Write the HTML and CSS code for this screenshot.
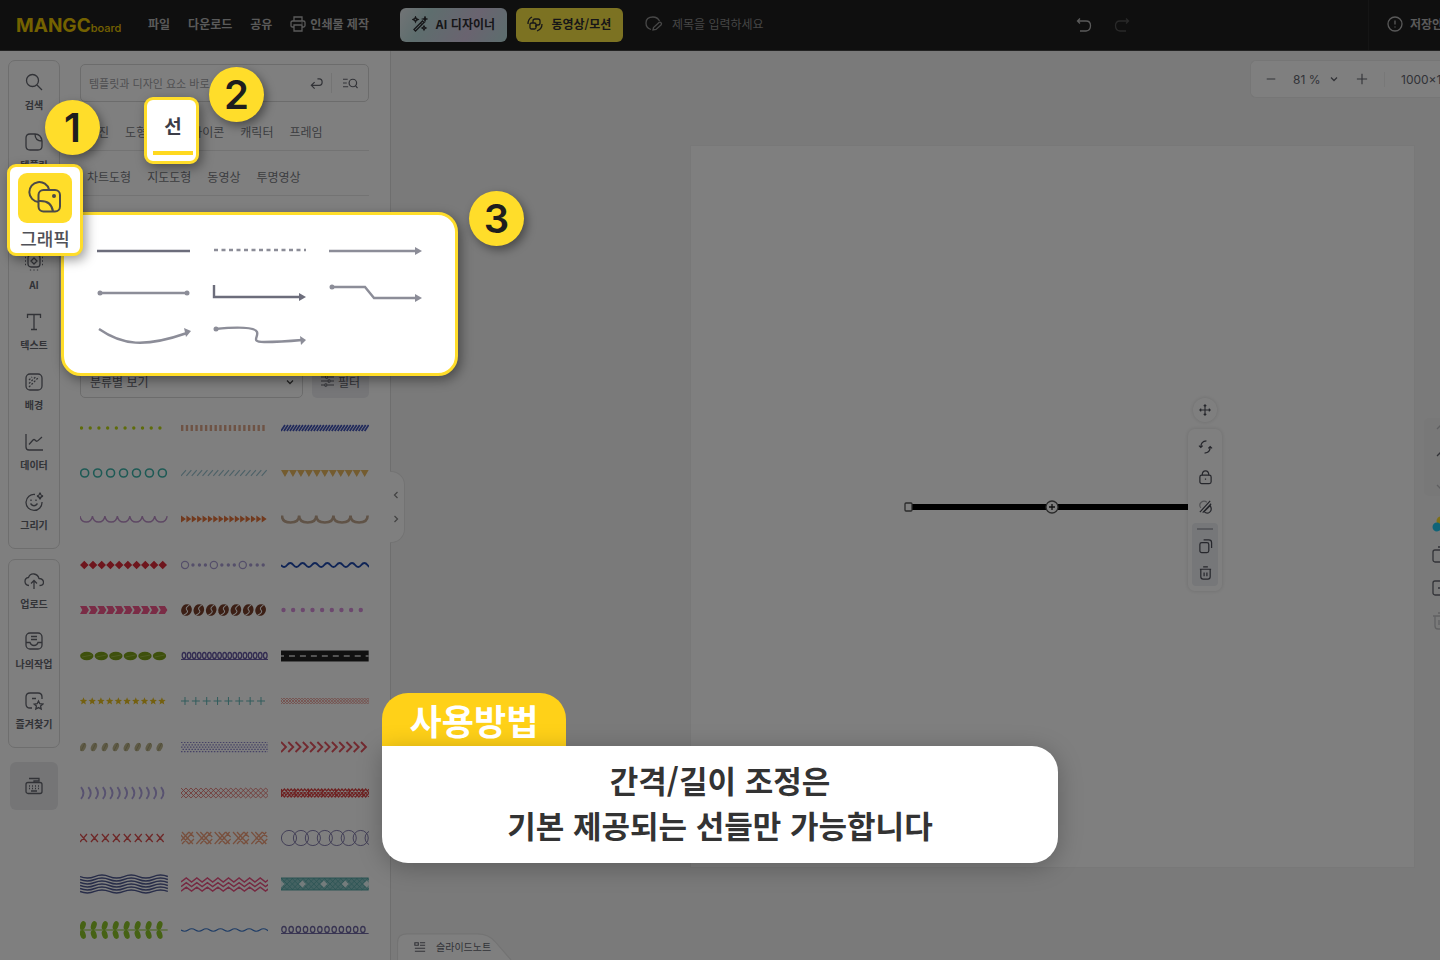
FILE: index.html
```
<!DOCTYPE html>
<html lang="ko">
<head>
  <meta charset="UTF-8">
  <title>MANGOboard</title>
  <link rel="stylesheet" href="styles.css">
</head>
<body>

  <div class="app">
    <header class="topbar">
      <a class="logo" href="#">MANGC<span>board</span></a>
      <nav class="menu">
        <a href="#">파일</a>
        <a href="#">다운로드</a>
        <a href="#">공유</a>
        <a href="#" class="print">
          <svg class="icon-sm" viewBox="0 0 16 16"><path d="M4 5V1h8v4M4 11H2.500Q1 11 1 9.500V6.500Q1 5 2.500 5h11Q15 5 15 6.500v3Q15 11 13.500 11H12M4 9h8v6H4zM11.500 7h1"/></svg>
          인쇄물 제작
        </a>
      </nav>
      <button class="btn btn-ai">
        <svg class="icon-sm" viewBox="0 0 16 16"><path d="M2 13.500 10.500 5l1.500 1.500L3.500 15zM8.500 7l1.500 1.500M3.500 1l.8 1.700L6 3.500l-1.700.8L3.500 6l-.8-1.700L1 3.500l1.700-.8zM13 1l.5 1.500L15 3l-1.500.5L13 5l-.5-1.500L11 3l1.500-.5zM12 10l.7 1.300L14 12l-1.300.7L12 14l-.7-1.300L10 12l1.300-.7z"/></svg>
        AI 디자이너
      </button>
      <button class="btn btn-video">
        <svg class="icon-sm" viewBox="0 0 16 16"><rect x="3" y="7" width="6" height="6" rx="1.500"/><path d="M6 7V5q0-2 2-2h3q2 0 2 2v2q0 2-2 2H9M9 9v2M1 8Q1 3 5 1M15 8q0 5-5 7"/></svg>
        동영상/모션
      </button>
      <label class="title">
        <svg class="icon" viewBox="0 0 20 20"><path d="M7 15.500Q2 14 2 9q0-6 7-6 4.500 0 6.500 4M9 16l.5-2.500L15 8.500q1-.8 2 .2t.2 2L12 15.500z"/></svg>
        <input type="text" placeholder="제목을 입력하세요">
      </label>
      <div class="history">
        <button aria-label="실행 취소"><svg class="icon-sm" viewBox="0 0 16 16"><path d="M4 1.500 1.500 4 4 6.500M2 4h8q4.500 0 4.500 4.800T10 14H4"/></svg></button>
        <button aria-label="다시 실행" disabled><svg class="icon-sm" viewBox="0 0 16 16"><path d="M12 1.500 14.500 4 12 6.500M14 4H6Q1.500 4 1.500 8.800T6 14h6"/></svg></button>
      </div>
      <div class="save">
        <svg class="icon-sm" viewBox="0 0 16 16"><circle cx="8" cy="8" r="7"/><path d="M8 4.500v4M8 10.500v1"/></svg>
        <span>저장안됨</span>
      </div>
    </header>

    <div class="main">
      <aside class="rail">
        <div class="rail-box">
          <button><svg class="icon" viewBox="0 0 20 20"><circle cx="8.500" cy="8.500" r="6"/><path d="m13 13 5 5"/></svg>검색</button>
          <button><svg class="icon" viewBox="0 0 20 20"><path d="M11 2H6Q2 2 2 6v8q0 4 4 4h8q4 0 4-4V9M11 2q6 0 7 7-7 0-7-7z"/></svg>템플릿</button>
          <button aria-label="그래픽"></button>
          <button><svg class="icon" viewBox="0 0 20 20"><rect x="4" y="3" width="12" height="12" rx="3"/><path d="m10 6 3 3-3 3-3-3zM1 5.500h1M1 9h1M1 12.500h1M18 5.500h1M18 9h1M18 12.500h1M6.500 17.500v1M10 17.500v1M13.500 17.500v1"/></svg>AI</button>
          <button><svg class="icon" viewBox="0 0 20 20"><path d="M3.500 6V2.500h13V6M10 2.500v15M7 17.500h6"/></svg>텍스트</button>
          <button><svg class="icon" viewBox="0 0 20 20"><rect x="2" y="2" width="16" height="16" rx="4"/><path stroke-dasharray="2 1.500" d="M5 15 15 5M5 11.500 11.500 5M5 8l3-3"/></svg>배경</button>
          <button><svg class="icon" viewBox="0 0 20 20"><path d="M2 2v13q0 3 3 3h14M5 12.500l4-4.500q1-1 2 0l1 1q1 .6 2-.4L18 5"/></svg>데이터</button>
          <button><svg class="icon" viewBox="0 0 20 20"><path d="M11 2.500A8 8 0 1 0 18 10M6.500 11.500q3.500 4.500 7 0M7 7.500v1.500M12 7.500v1.500M16 .5q.5 3 3 3.500-2.500.5-3 3.500-.5-3-3-3.500 2.500-.5 3-3.500z"/></svg>그리기</button>
        </div>
        <div class="rail-box">
          <button><svg class="icon" viewBox="0 0 20 20"><path d="M5 14.500Q1 14 1 10.500 1 7 4.500 6.500 6 2.500 10 3t5 4.500q4.500.5 4.500 3.700 0 3.300-4 3.300M10 18V9.500M7 12.500l3-3 3 3"/></svg>업로드</button>
          <button><svg class="icon" viewBox="0 0 20 20"><rect x="2" y="2" width="16" height="16" rx="4"/><path d="M2 11.500h4q1 3 4 3t4-3h4M7 5.500h6M7 8.500h6"/></svg>나의작업</button>
          <button><svg class="icon" viewBox="0 0 20 20"><path d="M8 17H6q-4 0-4-4V6q0-4 4-4h8q4 0 4 4v2M8 7.500h4M14.500 10l1.300 2.700 3 .4-2.200 2 .6 3-2.700-1.500-2.700 1.500.6-3-2.200-2 3-.4z"/></svg>즐겨찾기</button>
        </div>
        <button class="keyboard" aria-label="단축키"><svg class="icon" viewBox="0 0 20 20"><rect x="2" y="6.500" width="16" height="11" rx="2"/><path d="M5 10h1M8 10h1M11 10h1M14 10h1M5 12.500h1M8 12.500h1M11 12.500h1M14 12.500h1M7 15h6M10 6.500V5h5V2.500H5"/></svg></button>
      </aside>

      <section class="panel">
        <form class="search">
          <input type="text" aria-label="검색" placeholder="템플릿과 디자인 요소 바로 찾기">
          <button type="button" aria-label="입력"><svg class="icon-sm" viewBox="0 0 16 16"><path d="M6 7 2.500 10.500 6 14M3 10.500h8q3 0 3-3.500t-3-3.500H9"/></svg></button>
          <button type="button" class="search-go" aria-label="상세 검색"><svg class="icon-sm" viewBox="0 0 16 16"><circle cx="10.500" cy="8" r="4"/><path d="m13.500 11 2 2.500M0 4h5M0 8h4M0 12h5.500"/></svg></button>
        </form>
        <nav class="tabs">
          <a href="#">사진</a><a href="#">도형</a><a href="#" class="tab-line" aria-label="선"></a><a href="#">아이콘</a><a href="#">캐릭터</a><a href="#">프레임</a>
        </nav>
        <nav class="tabs">
          <a href="#">차트도형</a><a href="#">지도도형</a><a href="#">동영상</a><a href="#">투명영상</a>
        </nav>
        <div class="filters">
          <select aria-label="분류"><option>분류별 보기</option></select>
          <button><svg class="icon-sm" viewBox="0 0 16 16"><path d="M0 3h5M9 3h7M0 8h8M12 8h4M0 13h4M8 13h8"/><circle cx="7" cy="3" r="1.500"/><circle cx="10" cy="8" r="1.500"/><circle cx="6" cy="13" r="1.500"/></svg>필터</button>
        </div>
        <div class="line-list" id="lineList"></div>
        <div class="handle">
          <button aria-label="접기"><svg viewBox="0 0 8 8"><path d="M5.500 1 2.500 4l3 3"/></svg></button>
          <button aria-label="펼치기"><svg viewBox="0 0 8 8"><path d="m2.500 1 3 3-3 3"/></svg></button>
        </div>
      </section>

      <main class="workspace">
        <div class="canvas">
          <svg class="drawn-line" viewBox="0 0 290 16">
            <path class="bar" d="M6 8h284"/>
            <rect x="3" y="4" width="7" height="8" rx="1"/>
            <circle cx="150" cy="8" r="6"/>
            <path class="plus" d="M150 5v6M147 8h6"/>
          </svg>
          <div class="object-tools">
            <button class="move" aria-label="이동"><svg class="icon-xs" viewBox="0 0 14 14"><path d="M7 1v12M1 7h12M5.500 2.500 7 1l1.500 1.500M5.500 11.500 7 13l1.500-1.500M2.500 5.500 1 7l1.500 1.500M11.500 5.500 13 7l-1.500 1.500"/></svg></button>
            <div class="object-menu">
              <button aria-label="회전"><svg class="icon-sm" viewBox="0 0 16 16"><path d="M9 1.500Q3 2 3 8M1 6.500l2 2 2-2M7 14.500Q13 14 13 8M11 9.500l2-2 2 2"/></svg></button>
              <button aria-label="잠금"><svg class="icon-sm" viewBox="0 0 16 16"><rect x="2" y="6" width="12" height="9" rx="2"/><path d="M4.500 6q0-4.500 3.500-4.500T11.500 6M8 9.500v1.500"/></svg></button>
              <button aria-label="투명도"><svg class="icon-sm" viewBox="0 0 16 16"><path d="M2 13.500 13 1.500M5 14 14 4.500"/><path d="M6.500 13q3 3 6 .5t.5-7z"/><path opacity=".5" d="M3 9Q.5 5.500 3.500 3t6 0"/></svg></button>
              <div class="object-more">
                <span></span>
                <button aria-label="복제"><svg class="icon-sm" viewBox="0 0 16 16"><rect x="2" y="4.500" width="9.500" height="10.500" rx="2"/><path d="M6 1.500h5.500q3 0 3 3V10"/></svg></button>
                <button aria-label="삭제"><svg class="icon-sm" viewBox="0 0 16 16"><path d="M2 4h12M5.500 1.500h5M3 4v8q0 2.500 2.500 2.500h5Q13 14.500 13 12V4M6.500 7.500v4M9.500 7.500v4"/></svg></button>
              </div>
            </div>
          </div>
        </div>

        <div class="zoombar">
          <button aria-label="축소"><svg class="icon-xs" viewBox="0 0 14 14"><path d="M2 7h10"/></svg></button>
          <span class="zoom-value">81 %</span>
          <svg class="chevron" viewBox="0 0 8 8"><path d="m1 2.500 3 3 3-3"/></svg>
          <button aria-label="확대"><svg class="icon-xs" viewBox="0 0 14 14"><path d="M1 7h12M7 1v12"/></svg></button>
          <span class="page-size">1000×1000</span>
        </div>

        <div class="page-tools">
          <div class="page-order">
            <button aria-label="맨 위로" disabled><svg class="icon-sm" viewBox="0 0 16 16"><path d="M8 14V3M4 7l4-4 4 4"/></svg></button>
            <button aria-label="위로"><svg class="icon-sm" viewBox="0 0 16 16"><path d="M8 14V3M4 7l4-4 4 4"/></svg></button>
            <button aria-label="아래로" disabled><svg class="icon-sm" viewBox="0 0 16 16"><path d="M8 2v11M4 9l4 4 4-4"/></svg></button>
          </div>
          <button aria-label="색상"><svg class="palette" viewBox="0 0 18 16"><circle cx="9" cy="5" r="4.500" fill="#ffe030"/><circle cx="5" cy="11" r="4.500" fill="#20c8f0"/><circle cx="13" cy="11" r="4.500" fill="#2020e0"/></svg></button>
          <button aria-label="페이지 복제"><svg class="icon" viewBox="0 0 20 20"><rect x="2" y="5" width="13" height="12" rx="2"/><path d="M7 2h8q3 0 3 3v7"/></svg></button>
          <button aria-label="페이지 추가"><svg class="icon" viewBox="0 0 20 20"><rect x="2" y="3" width="16" height="14" rx="2"/><path d="M7 10h6M10 7v6"/></svg></button>
          <button aria-label="페이지 삭제" disabled><svg class="icon" viewBox="0 0 20 20"><path d="M2 5h16M7 2h6M4 5v10q0 3 3 3h6q3 0 3-3V5M8 9v5M12 9v5"/></svg></button>
        </div>

        <button class="note-tab">
          <svg class="note-shape" viewBox="0 0 124 28" preserveAspectRatio="none"><path d="M.5 28V10Q.5 1 10 1h70q12 0 19 9l15 18"/></svg>
          <svg class="icon-xs" viewBox="0 0 14 14"><path d="M1 2h4v3H1zM7 2h6M7 5h6M1 8.500h12M1 12h12"/></svg>
          <span>슬라이드노트</span>
        </button>
      </main>
    </div>
  </div>

  <div class="dim"></div>

  <div class="guide-lines spot">
    <svg viewBox="0 0 94 42"><path class="dark" d="M1 21h93"/></svg>
    <svg viewBox="0 0 94 42"><path stroke-dasharray="4 3.500" d="M2 20h92"/></svg>
    <svg viewBox="0 0 94 42"><path d="M1 21h88"/><path class="head" d="m87 17 7 4-7 4z"/></svg>
    <svg viewBox="0 0 94 42"><path d="M3 21h89"/><circle cx="4" cy="21" r="2.500"/><circle cx="91" cy="21" r="2.500"/></svg>
    <svg viewBox="0 0 94 42"><path class="dark" d="M2 13v12h86"/><path class="head dark-head" d="m87 21 7 4-7 4z"/></svg>
    <svg viewBox="0 0 94 42"><path d="M3 15h34l9 11h43"/><circle cx="4" cy="15" r="2.500"/><path class="head" d="m87 22 7 4-7 4z"/></svg>
    <svg viewBox="0 0 94 42"><path d="M3 15C26 31 48 34 91 19"/><path class="head" d="m88 14 7 3-5 6z"/></svg>
    <svg viewBox="0 0 94 42"><path d="M3 15C25 13 43 13 45 18S38 28 52 28q16 0 38-2"/><circle cx="4" cy="15" r="2.500"/><path class="head" d="m88 22 6 4-5 5z"/></svg>
  </div>

  <div class="guide-graphic spot">
    <div class="guide-icon">
      <svg viewBox="0 0 36 36"><path d="M11.500 22A10 10 0 1 1 22 9.500"/><rect x="11.500" y="10" width="21.500" height="21.500" rx="5"/><path d="M11.500 21q13-1 14.500 10.500"/><circle cx="27" cy="16" r="2"/></svg>
    </div>
    <span>그래픽</span>
  </div>

  <div class="guide-tab spot"><span>선</span></div>

  <div class="step step-1">1</div>
  <div class="step step-2">2</div>
  <div class="step step-3">3</div>

  <div class="howto">
    <h2>사용방법</h2>
    <p>간격/길이 조정은<br>기본 제공되는 선들만 가능합니다</p>
  </div>

  <script>
    // each swatch is 88 x 30, centred on y = 15
    const rep = (n, step, fn) => Array.from({ length: n }, (_, i) => fn(i * step, i)).join("");
    const stroke = (color, width, d) => `<path fill="none" stroke="${color}" stroke-width="${width}" d="${d}"/>`;
    const fill = (color, d) => `<path fill="${color}" d="${d}"/>`;
    const dot = (x, r, color) => `<circle cx="${x}" cy="15" r="${r}" fill="${color}"/>`;
    const ring = (x, r, color, w) => `<circle cx="${x}" cy="15" r="${r}" fill="none" stroke="${color}" stroke-width="${w}"/>`;
    const wave = (y, half, amp, n) => `M0 ${y}` + rep(n, 1, (_, i) => `q${half / 2} ${i % 2 ? -amp : amp} ${half} 0`);
    const zigzag = (y, half, h) => `M0 ${y}` + rep(Math.ceil(88 / half), 1, (_, i) => `l${half} ${i % 2 ? h : -h}`);
    const mesh = (top, h, step) => rep(Math.ceil(88 / step) + 4, step, x => `M${x - 2 * step} ${top}l${h} ${h}M${x - 2 * step} ${top + h}l${h} ${-h}`);
    const loops = (n, step, rx, color) =>
      rep(n, step, x => `<ellipse cx="${x + 3}" cy="14.500" rx="${rx}" ry="3" fill="none" stroke="${color}"/>`) + stroke(color, 1, "M0 18.500h88");

    const lines = [
      rep(10, 8.75, x => dot(x + 1.5, 1.7, "#bcd814")),
      stroke("#dca68a", 2.4, rep(18, 4.8, x => `M${x + 1.2} 12v6`)),
      stroke("#4254b8", 1.7, rep(29, 3, x => `M${x} 18l4-6`)),
      rep(7, 13, x => ring(x + 4.7, 4, "#3cb4aa", 1.6)),
      stroke("#9cc4d0", 1.2, rep(16, 5.4, x => `M${x} 18l5-6`)),
      fill("#e8b860", rep(11, 8, x => `M${x} 12h8l-4 7z`)),
      stroke("#bc90c8", 1.4, "M0 12" + rep(7, 1, () => "q1 6 6.250 6t6.250-6")),
      fill("#e4743c", rep(16, 5.4, x => `M${x} 11.500l5 3.500-5 3.500z`)),
      stroke("#c0a68e", 2.6, "M1 11.500" + rep(5, 1, () => "q0 7 8.600 7t8.600-7")),
      fill("#dd2d3a", rep(10, 8.75, x => `M${x} 15l4.300-4.300 4.300 4.300-4.300 4.300z`)),
      rep(3, 29, x => ring(x + 4, 3.6, "#aa9ed4", 1.3) + dot(x + 12, 1.7, "#aa9ed4") + dot(x + 18.5, 1.7, "#aa9ed4") + dot(x + 24.5, 1.7, "#aa9ed4")),
      stroke("#1e48ac", 2, wave(15, 6.2, 4, 15)),
      fill("#f4588c", rep(10, 8.75, x => `M${x} 11h6.500l2.500 4-2.500 4h-6.500l2.300-4z`)),
      rep(7, 12.4, x => `<g transform="rotate(25 ${x + 5.5} 15)"><ellipse cx="${x + 5.5}" cy="15" rx="5.200" ry="6" fill="#783f2b"/>${stroke("#fff", 1, `M${x + 6} 9q-3 5 0 6t-1 6`)}</g>`),
      rep(9, 9.7, x => dot(x + 2.5, 2.2, "#d890dc")),
      rep(6, 14.6, x => `<ellipse cx="${x + 6.8}" cy="15" rx="6.700" ry="4.200" fill="#7ca018"/>${stroke("#b4c968", 0.6, `M${x + 2} 16l10-2`)}`),
      loops(17, 5.1, 1.8, "#6658a4"),
      `<rect y="9.500" width="88" height="11" fill="#222"/>` + `<path stroke="#d4d4d4" stroke-width="1.500" stroke-dasharray="6 5" stroke-dashoffset="3" d="M0 15h88"/>`,
      fill("#e8c020", rep(10, 8.75, x => `M${x + 3.5} 11.300l1 2.500 2.700.2-2 1.800.7 2.700-2.400-1.500-2.400 1.500.7-2.700-2-1.800 2.700-.2z`)),
      stroke("#60b8b8", 1, rep(8, 10.9, x => `M${x} 15h8M${x + 4} 11v8`)),
      stroke("#e8968e", 0.8, mesh(12, 6, 3)),
      rep(8, 11, x => `<ellipse cx="${x + 3}" cy="15" rx="2.800" ry="4.500" fill="#beb78f" transform="rotate(25 ${x + 3} 15)"/>${stroke("#928b62", 0.6, `M${x + 1} 19l4-8`)}`),
      rep(5, 1, (_, i) => `<path stroke="#8c84cc" stroke-width="1.200" stroke-dasharray="1.500 1.500" stroke-dashoffset="${i % 2 * 1.5}" d="M0 ${10.500 + i * 2.3}h88"/>`),
      stroke("#e55460", 1.9, rep(12, 7.3, x => `M${x} 10l5 5-5 5`)),
      stroke("#b0a4e0", 1.9, rep(12, 7.3, x => `M${x + 1} 9q5 6 0 12`)),
      stroke("#e47470", 0.9, mesh(10, 10, 5)),
      stroke("#dc4444", 1.2, zigzag(19, 6.8, 8) + zigzag(11, 6.8, -8) + zigzag(15, 3.4, 4) + zigzag(15, 3.4, -4) + rep(7, 13.6, x => `M${x + .5} 11v8`)),
      stroke("#dc5050", 1.3, rep(8, 11, x => `M${x} 11l7 8M${x} 19l7-8`)),
      stroke("#f0a07c", 1.3, rep(6, 18.4, x => `M${x - 3} 9l11 12M${x + 1} 9l11 12M${x - 3} 21l11-12M${x + 1} 21l11-12M${x + 8} 9l5 5M${x + 8} 21l5-5`)),
      rep(8, 12, x => ring(x + 8, 7.6, "#7870a4", 0.9)),
      stroke("#505a92", 1.4, rep(6, 3, y => wave(7.5 + y, 14.7, 3, 6))),
      stroke("#ec5484", 1.5, rep(3, 4.6, y => zigzag(13 + y, 5.3, 4))),
      `<rect y="9" width="88" height="12" fill="#88c4c4"/>` + stroke("#58a8a8", 0.8, mesh(9, 12, 5.4)) + stroke("#50a4a4", 1, "M0 9h88M0 21h88") + fill("#e8f8f8", rep(5, 21.5, x => `M${x} 11.500l3.500 3.500-3.500 3.500-3.500-3.500z`)),
      rep(8, 11, x => `<ellipse cx="${x + 3}" cy="10.500" rx="2.800" ry="4.500" fill="#8cc428" transform="rotate(18 ${x + 3} 10)"/><ellipse cx="${x + 3}" cy="19.500" rx="2.800" ry="4.500" fill="#8cc428" transform="rotate(-18 ${x + 3} 20)"/>`) + stroke("#8cc428", 1, "M0 15h88"),
      stroke("#3c78cc", 1.2, wave(15, 7.2, 2.5, 13)),
      loops(12, 7.2, 2.2, "#7068a4"),
      "",
      "",
      fill("#8cd0f0", "M12 30V7q3-7 12-7h38q9 0 12 7v23z")
    ];

    document.getElementById("lineList").innerHTML =
      lines.map(art => `<button aria-label="선"><svg viewBox="0 0 88 30">${art}</svg></button>`).join("");
  </script>

</body>
</html>
```
FILE: styles.css
```
* {
  box-sizing: border-box;
}

body {
  margin: 0;
  position: relative;
  height: 100vh;
  overflow: hidden;
  font-family: "Noto Sans CJK KR", "Noto Sans", sans-serif;
  font-size: 12px;
  color: #64666f;
  background: #f5f5f5;
}

button {
  display: flex;
  align-items: center;
  justify-content: center;
  padding: 0;
  border: 0;
  background: none;
  font: inherit;
  color: inherit;
}

button:disabled {
  opacity: 0.35;
}

input {
  border: 0;
  padding: 0;
  background: none;
  font: inherit;
  min-width: 0;
}

a {
  color: inherit;
  text-decoration: none;
}

svg {
  display: block;
  flex: none;
  fill: none;
  stroke: currentColor;
  stroke-width: 1.3;
}

.icon {
  width: 20px;
  height: 20px;
}

.icon-sm {
  width: 16px;
  height: 16px;
}

.icon-xs {
  width: 12px;
  height: 12px;
}

.app {
  display: flex;
  flex-direction: column;
  height: 100%;
}

/* top bar */
.topbar {
  display: flex;
  align-items: center;
  height: 51px;
  flex: none;
  padding-left: 16px;
  background: #1e1e1e;
  border-bottom: 1px solid #444;
  color: #b4b4b4;
  font-weight: 700;
  line-height: 16px;
}

.logo {
  width: 132px;
  font: 700 19px Inter, sans-serif;
  color: #e8c400;
}

.logo span {
  font-size: 11px;
  font-weight: 500;
}

.menu {
  display: flex;
  align-items: center;
  gap: 18px;
  padding-bottom: 2px;
  white-space: nowrap;
}

.print {
  display: flex;
  align-items: center;
  gap: 4px;
}

.btn {
  width: 107px;
  height: 34px;
  gap: 8px;
  padding-bottom: 2px;
  border-radius: 6px;
  color: #2c2c30;
  white-space: nowrap;
}

.btn-ai {
  margin-left: 31px;
  background: linear-gradient(120deg, #e4e8ec, #bcdcdc 25%, #d4c8e0 65%, #b8dcdc);
}

.btn-video {
  margin-left: 9px;
  background: #f8e444;
}

.title {
  display: flex;
  align-items: center;
  gap: 8px;
  margin-left: 21px;
  padding-bottom: 2px;
  color: #909090;
}

.title input {
  font-weight: 400;
}

.title input::placeholder {
  color: #8c8c8c;
}

.history {
  display: flex;
  gap: 22px;
  margin-left: auto;
  margin-right: 238px;
}

.save {
  display: flex;
  align-items: center;
  gap: 7px;
  width: 72px;
  height: 100%;
  padding: 0 0 2px 18px;
  border-left: 1px solid #2a2a2a;
  overflow: hidden;
  white-space: nowrap;
}

.main {
  display: flex;
  flex: 1;
  min-height: 0;
}

/* left rail */
.rail {
  display: flex;
  flex-direction: column;
  gap: 10px;
  width: 60px;
  flex: none;
  padding: 9px 0 0 8px;
  background: #fff;
}

.rail-box {
  padding: 3px 0 4px;
  border: 1px solid #dcdcdc;
  border-radius: 7px;
}

.rail-box button {
  flex-direction: column;
  gap: 6px;
  width: 100%;
  height: 60px;
  padding-bottom: 4px;
  font-size: 10px;
  line-height: 14px;
  font-weight: 700;
  white-space: nowrap;
}

.rail .keyboard {
  width: 48px;
  height: 48px;
  margin: 4px 2px;
  border-radius: 6px;
  background: #ebebed;
}

/* element panel */
.panel {
  position: relative;
  display: flex;
  flex-direction: column;
  width: 331px;
  flex: none;
  padding: 13px 21px 0 20px;
  background: #fff;
  border-right: 1px solid #dcdcdc;
}

.search {
  display: flex;
  align-items: center;
  height: 38px;
  flex: none;
  padding: 0 10px 0 8px;
  border: 1px solid #d8d8d8;
  border-radius: 5px;
}

.search input {
  flex: 1;
  font-size: 11px;
}

.search input::placeholder {
  color: #a0a0a4;
}

.search svg {
  width: 15px;
}

.search-go {
  height: 20px;
  margin-left: 7px;
  padding-left: 11px;
  border-left: 1px solid #e8e8e8;
}

.tabs {
  display: flex;
  gap: 16px;
  height: 45px;
  flex: none;
  padding: 10px 7px 0;
  line-height: 18px;
  border-bottom: 1px solid #e6e6e6;
  color: #787a82;
}

.search + .tabs {
  height: 49px;
  padding-top: 21px;
}

.tabs + .tabs {
  padding-top: 17px;
}

.tab-line {
  width: 12px;
}

.filters {
  display: flex;
  gap: 9px;
  margin-top: 170px;
}

.filters select {
  flex: 1;
  height: 32px;
  padding: 0 9px 2px;
  border: 1px solid #d8d8d8;
  border-radius: 5px;
  appearance: none;
  font: inherit;
  color: inherit;
  background: url("data:image/svg+xml,%3Csvg xmlns='http://www.w3.org/2000/svg' width='8' height='8'%3E%3Cpath d='m1 2.500 3 3 3-3' fill='none' stroke='%23444' stroke-width='1.300'/%3E%3C/svg%3E") no-repeat right 8px center;
}

.filters button {
  width: 57px;
  gap: 4px;
  padding-bottom: 2px;
  border-radius: 5px;
  background: #ecedf1;
}

.filters button svg {
  width: 13px;
}

/* 13 equal rows, the last one runs off the window */
.line-list {
  display: grid;
  grid-template-columns: repeat(3, 1fr);
  grid-template-rows: repeat(13, 1fr);
  column-gap: 13px;
  flex: 1;
  margin: 7px 0 -38px;
  overflow: hidden;
}

.line-list svg {
  width: 100%;
  height: 30px;
  stroke: none;
}

.handle {
  position: absolute;
  top: 420px;
  right: -15px;
  display: flex;
  flex-direction: column;
  align-items: center;
  justify-content: center;
  gap: 16px;
  width: 15px;
  height: 72px;
  padding-right: 3px;
  border: 1px solid #e6e6e6;
  border-left: 0;
  border-radius: 0 14px 14px 0;
  background: #fff;
  color: #888;
  z-index: 1;
}

.handle svg {
  width: 8px;
  height: 8px;
}

/* workspace */
.workspace {
  position: relative;
  display: flex;
  flex: 1;
  min-width: 0;
  padding: 94px 25px 92px 299px;
  background: #f5f5f5;
  overflow: hidden;
}

.canvas {
  position: relative;
  flex: 1;
  background: #fff;
  border: 1px solid #f0f0f0;
}

.drawn-line {
  position: absolute;
  top: 353px;
  left: 211px;
  width: 290px;
  height: 16px;
  stroke: #555;
}

.drawn-line .bar {
  stroke: #000;
  stroke-width: 6;
}

.drawn-line rect,
.drawn-line circle {
  fill: #fff;
}

.drawn-line .plus {
  stroke: #222;
}

.object-tools {
  position: absolute;
  top: 252px;
  left: 497px;
  width: 34px;
  color: #4c4e58;
}

.move {
  width: 24px;
  height: 24px;
  margin: 0 auto 7px;
  border-radius: 50%;
  background: #fff;
  box-shadow: 0 0 4px rgba(0, 0, 0, 0.15);
}

.object-menu {
  display: flex;
  flex-direction: column;
  align-items: center;
  gap: 14px;
  padding: 10px 4px 5px;
  border-radius: 7px;
  background: #fff;
  box-shadow: 0 0 4px rgba(0, 0, 0, 0.15);
}

.object-menu svg {
  width: 15px;
}

.object-more {
  display: flex;
  flex-direction: column;
  align-items: center;
  gap: 11px;
  width: 26px;
  margin-top: -6px;
  padding: 5px 0;
  border-radius: 4px;
  background: #eceef3;
}

.object-more span {
  width: 16px;
  height: 2px;
  margin-bottom: -3px;
  background: #b0b2ba;
}

.zoombar {
  position: absolute;
  top: 9px;
  right: 0;
  display: flex;
  align-items: center;
  width: 190px;
  height: 38px;
  padding-left: 14px;
  border: 1px solid #ececec;
  border-right: 0;
  border-radius: 6px 0 0 6px;
  background: #fff;
  overflow: hidden;
  font-family: Inter, sans-serif;
  font-size: 12px;
  white-space: nowrap;
}

.zoombar > * {
  flex: none;
}

.zoom-value {
  margin-left: 16px;
  width: 37px;
}

.chevron {
  width: 8px;
  height: 8px;
  margin-right: 18px;
}

.page-size {
  margin-left: 16px;
  padding-left: 16px;
  border-left: 1px solid #f0f0f0;
}

.page-tools {
  position: absolute;
  top: 367px;
  right: -18px;
  display: flex;
  flex-direction: column;
  align-items: center;
  gap: 13px;
  width: 34px;
}

.page-order {
  display: flex;
  flex-direction: column;
  align-items: center;
  gap: 11px;
  width: 34px;
  padding: 4px 0;
  margin-bottom: 7px;
  border-radius: 5px;
  background: #f0f0f0;
}

.palette {
  width: 18px;
  height: 16px;
  stroke: none;
}

.note-tab {
  position: absolute;
  left: 6px;
  bottom: 0;
  justify-content: flex-start;
  gap: 10px;
  width: 124px;
  height: 27px;
  padding-left: 17px;
  font-size: 10px;
}

.note-tab span,
.note-tab .icon-xs {
  position: relative;
}

.note-shape {
  position: absolute;
  inset: 0;
  width: 100%;
  height: 100%;
  fill: #fff;
  stroke: #e6e6e6;
}

/* tutorial layer */
.dim {
  position: absolute;
  inset: 0;
  background: rgba(0, 0, 0, 0.5);
  z-index: 2;
}

.spot {
  position: absolute;
  z-index: 3;
  border: 3px solid #ffdd2a;
  background: #fff;
  box-shadow: 3px 4px 12px rgba(0, 0, 0, 0.4);
}

.guide-lines {
  top: 212px;
  left: 61px;
  display: grid;
  grid-template-columns: repeat(3, 94px);
  column-gap: 22px;
  width: 397px;
  padding: 15px 32px 17px;
  border-radius: 20px;
}

.guide-lines svg {
  width: 94px;
  height: 42px;
  stroke: #8c8d98;
  stroke-width: 2.4;
  overflow: visible;
}

.guide-lines .dark {
  stroke: #6c6d7b;
}

.guide-lines circle,
.guide-lines .head {
  fill: #8c8d98;
  stroke: none;
}

.guide-lines .dark-head {
  fill: #6c6d7b;
}

.guide-graphic {
  top: 164px;
  left: 7px;
  display: flex;
  flex-direction: column;
  align-items: center;
  width: 76px;
  height: 92px;
  padding-top: 6px;
  border-radius: 9px;
  font-size: 18px;
  line-height: 30px;
  font-weight: 500;
  color: #505158;
}

.guide-icon {
  display: flex;
  align-items: center;
  justify-content: center;
  width: 54px;
  height: 51px;
  border-radius: 9px;
  background: #ffdd2a;
}

.guide-icon svg {
  width: 36px;
  height: 36px;
  stroke: #4c4a48;
  stroke-width: 2;
}

.guide-icon circle {
  fill: #4c4a48;
  stroke: none;
}

.guide-tab {
  top: 97px;
  left: 144px;
  display: flex;
  flex-direction: column;
  width: 55px;
  height: 67px;
  padding: 11px 3px 6px 6px;
  border-radius: 9px;
  text-align: center;
  font-size: 19px;
  line-height: 30px;
  font-weight: 700;
  color: #3c3d48;
}

.guide-tab span {
  flex: 1;
  border-bottom: 4px solid #ffd91f;
}

.step {
  position: absolute;
  z-index: 4;
  width: 55px;
  height: 55px;
  border-radius: 50%;
  background: #ffdd2a;
  box-shadow: 3px 4px 10px rgba(0, 0, 0, 0.4);
  font: 600 40px/55px Inter, sans-serif;
  text-align: center;
  color: #1e1e1e;
}

.step-1 {
  top: 100px;
  left: 45px;
}

.step-2 {
  top: 67px;
  left: 209px;
}

.step-3 {
  top: 191px;
  left: 469px;
}

.howto {
  position: absolute;
  top: 693px;
  left: 0;
  right: 0;
  z-index: 4;
  width: 676px;
  margin: 0 auto;
}

.howto h2 {
  width: 184px;
  margin: 0;
  border-radius: 26px 26px 0 0;
  background: #ffd118;
  font-size: 35px;
  line-height: 53px;
  font-weight: 700;
  text-align: center;
  color: #fff;
}

.howto p {
  margin: 0;
  padding: 11px 0 16px;
  border-radius: 0 26px 26px 26px;
  background: #fff;
  box-shadow: 0 4px 24px rgba(0, 0, 0, 0.25);
  font-size: 31px;
  line-height: 45px;
  font-weight: 700;
  text-align: center;
  color: #333;
}
```
